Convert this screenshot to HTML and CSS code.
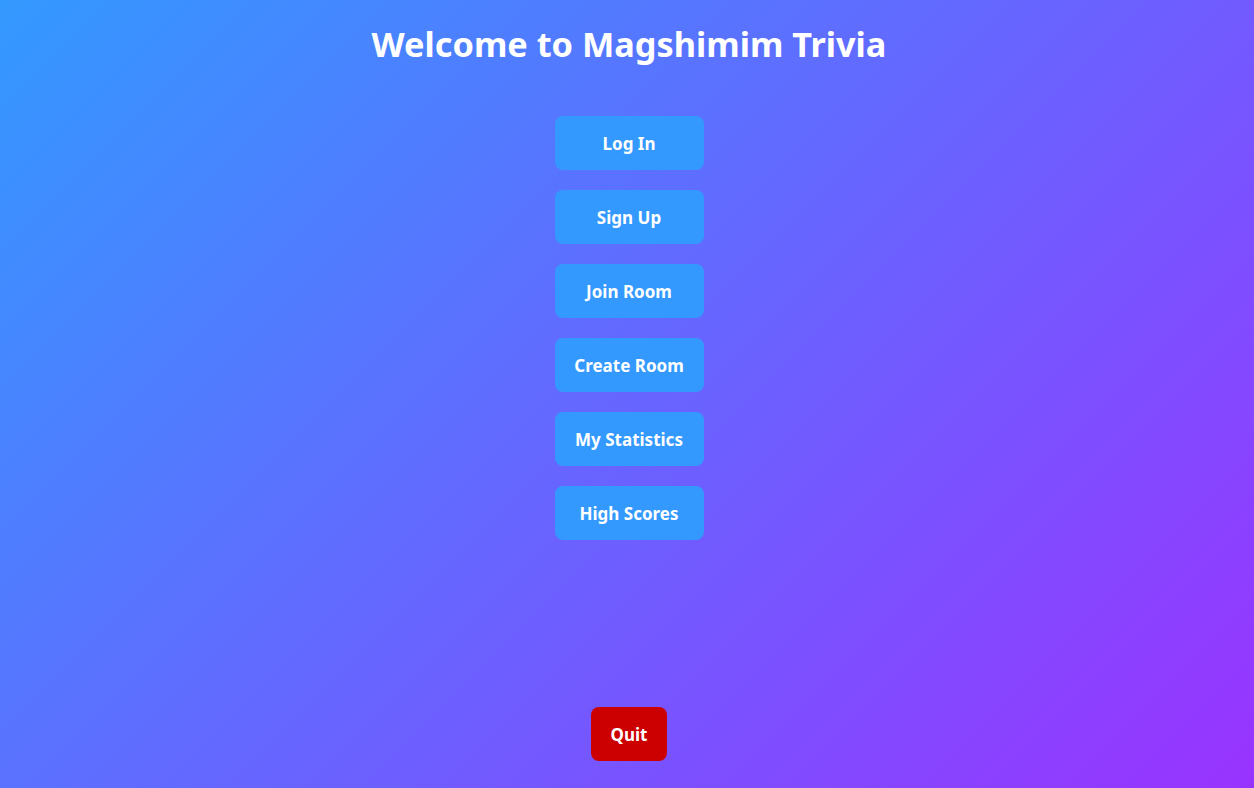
FILE: index.html
```html
<!DOCTYPE html>
<html>
<head>
<meta charset="utf-8">
<link rel="stylesheet" href="styles.css">
</head>
<body>
<div class="page">
  <h1 class="title">Welcome to Magshimim Trivia</h1>
  <div class="menu">
    <button class="btn">Log In</button>
    <button class="btn">Sign Up</button>
    <button class="btn">Join Room</button>
    <button class="btn">Create Room</button>
    <button class="btn">My Statistics</button>
    <button class="btn">High Scores</button>
  </div>
  <button class="btn quit">Quit</button>
</div>
</body>
</html>
```
FILE: styles.css
```css
html, body {
  margin: 0;
  padding: 0;
  height: 100%;
}
body {
  background: linear-gradient(135deg, #3399ff 0%, #9933ff 100%);
  font-family: "Noto Sans", "Open Sans", sans-serif;
  color: #fff;
}
.page {
  height: 100vh;
  box-sizing: border-box;
  display: flex;
  flex-direction: column;
  align-items: center;
  padding: 0 0 27px 4px;
}
.title {
  margin: 22px 0 0;
  font-size: 34.3px;
  line-height: 44px;
  font-weight: 700;
  color: #fff;
}
.menu {
  margin-top: 50px;
  width: 149px;
  display: flex;
  flex-direction: column;
  align-items: stretch;
  gap: 20px;
}
.btn {
  height: 54px;
  padding: 0 16px;
  border: none;
  border-radius: 8px;
  background: #3399ff;
  color: #fff;
  font-family: "Noto Sans", "Open Sans", sans-serif;
  font-weight: 700;
  font-size: 17px;
}
.quit {
  margin-top: auto;
  width: 76px;
  padding: 0;
  background: #cc0000;
}
```
